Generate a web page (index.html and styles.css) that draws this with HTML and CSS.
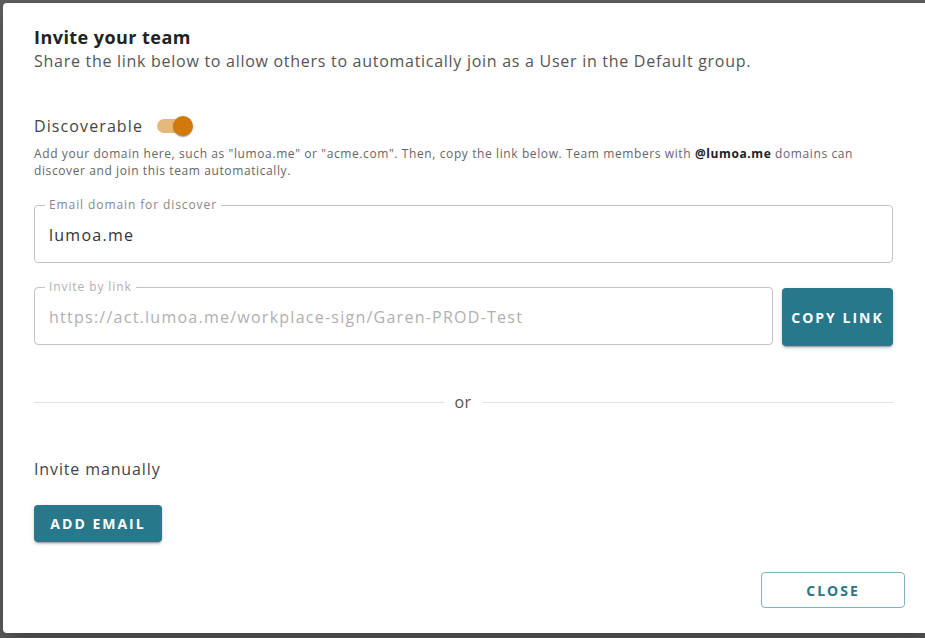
FILE: index.html
```html
<!DOCTYPE html>
<html lang="en">
<head>
<meta charset="utf-8">
<title>Invite your team</title>
<link rel="stylesheet" href="styles.css">
</head>
<body>
<div class="dialog" role="dialog" aria-labelledby="dlg-title">
  <div class="content">
    <h2 class="title" id="dlg-title">Invite your team</h2>
    <p class="subtitle">Share the link below to allow others to automatically join as a User in the Default group.</p>

    <div class="discover-row">
      <span class="discover-label">Discoverable</span>
      <span class="switch" aria-checked="true" role="switch">
        <span class="switch-track"></span>
        <span class="switch-thumb"></span>
      </span>
    </div>
    <p class="help">Add your domain here, such as "lumoa.me" or "acme.com". Then, copy the link below. Team members with <b>@lumoa.me</b> domains can discover and join this team automatically.</p>

    <fieldset class="field">
      <legend class="field-label">Email domain for discover</legend>
      <div class="field-value">lumoa.me</div>
    </fieldset>

    <div class="link-row">
      <fieldset class="field field-disabled">
        <legend class="field-label">Invite by link</legend>
        <div class="field-value">https://act.lumoa.me/workplace-sign/Garen-PROD-Test</div>
      </fieldset>
      <button class="btn btn-contained btn-copy">Copy link</button>
    </div>

    <div class="divider">
      <span class="divider-line"></span>
      <span class="divider-text">or</span>
      <span class="divider-line"></span>
    </div>

    <p class="manual">Invite manually</p>
    <div class="manual-actions">
      <button class="btn btn-contained btn-add">Add email</button>
    </div>
  </div>
  <div class="actions">
    <button class="btn btn-outlined btn-close">Close</button>
  </div>
</div>
</body>
</html>
```

FILE: styles.css
```css
* { box-sizing: border-box; }

html, body {
  margin: 0;
  height: 100%;
}

body {
  background: #5c5c5c;
  font-family: "Open Sans", "Noto Sans", "DejaVu Sans", sans-serif;
  color: #333;
  overflow: hidden;
  padding: 3px 0 0 3px;
}

.dialog {
  width: 930px;
  height: 630px;
  background: #fff;
  border-radius: 4px;
  display: flex;
  flex-direction: column;
  box-shadow: 0 11px 15px -7px rgba(0,0,0,.2), 0 24px 38px 3px rgba(0,0,0,.14);
}

.content {
  flex: 1;
  padding: 22px 40px 0 31px;
  display: flex;
  flex-direction: column;
}

.title {
  margin: 0;
  font-size: 18px;
  line-height: 24px;
  font-weight: 700;
  color: #222;
  letter-spacing: 0.45px;
}

.subtitle {
  margin: 0;
  font-size: 16px;
  line-height: 24px;
  color: #555;
  letter-spacing: 0.72px;
}

.discover-row {
  display: flex;
  align-items: center;
  gap: 14px;
  margin-top: 41px;
  height: 24px;
}

.discover-label {
  font-size: 16px;
  color: #444;
  letter-spacing: 1.1px;
}

.switch {
  position: relative;
  width: 37px;
  height: 20px;
  display: inline-block;
}

.switch-track {
  position: absolute;
  left: 0;
  top: 3px;
  width: 34px;
  height: 14px;
  border-radius: 7px;
  background: #e5b97c;
}

.switch-thumb {
  position: absolute;
  left: 16px;
  top: 0;
  width: 20px;
  height: 20px;
  border-radius: 50%;
  background: #d2790c;
  box-shadow: 0 2px 1px -1px rgba(0,0,0,.2), 0 1px 1px 0 rgba(0,0,0,.14), 0 1px 3px 0 rgba(0,0,0,.12);
}

.help {
  margin: 7px 0 0;
  font-size: 12px;
  line-height: 17px;
  color: #666;
  letter-spacing: 0.6px;
}

.help b {
  color: #222;
  font-weight: 700;
}

.field {
  margin: 19px 0 0;
  padding: 0 14px 4px 10px;
  border: 1px solid #c4c4c4;
  border-radius: 4px;
  min-width: 0;
}

.field-label {
  padding: 0 4px;
  font-size: 12px;
  line-height: 14px;
  color: #888;
  letter-spacing: 0.9px;
}

.field-value {
  padding-left: 4px;
  height: 46px;
  line-height: 46px;
  font-size: 16px;
  color: #333;
  white-space: nowrap;
  overflow: hidden;
  letter-spacing: 1.25px;
}

.field-disabled .field-label,
.field-disabled .field-value {
  color: #b0b0b0;
}

.link-row {
  display: flex;
  align-items: flex-end;
  gap: 9px;
  margin-top: 17px;
}

.link-row .field {
  flex: 1;
  margin: 0;
}

.btn {
  font-family: inherit;
  border-radius: 4px;
  font-weight: 700;
  font-size: 14px;
  letter-spacing: 2px;
  text-transform: uppercase;
  cursor: pointer;
  padding: 0;
}

.btn-contained {
  background: #27788a;
  color: #fff;
  border: 0;
  box-shadow: 0 3px 1px -2px rgba(0,0,0,.2), 0 2px 2px 0 rgba(0,0,0,.14), 0 1px 5px 0 rgba(0,0,0,.12);
}

.btn-copy {
  width: 111px;
  height: 58px;
  margin-bottom: -1px;
}

.divider {
  display: flex;
  align-items: center;
  margin-top: 47px;
  height: 20px;
}

.divider-line {
  flex: 1;
  height: 1px;
  background: #e0e0e0;
}

.divider-text {
  padding: 0 11px 0 10px;
  font-size: 16px;
  color: #555;
  line-height: 20px;
  letter-spacing: 0.5px;
}

.manual {
  margin: 45px 0 0;
  font-size: 16px;
  line-height: 24px;
  color: #444;
  letter-spacing: 0.87px;
}

.manual-actions {
  display: flex;
  margin-top: 24px;
}

.btn-add {
  width: 128px;
  height: 37px;
}

.actions {
  display: flex;
  justify-content: flex-end;
  padding: 0 28px 25px 0;
}

.btn-outlined {
  background: #fff;
  color: #2a7586;
  border: 1px solid #80b5c1;
}

.btn-close {
  width: 144px;
  height: 36px;
}
```
